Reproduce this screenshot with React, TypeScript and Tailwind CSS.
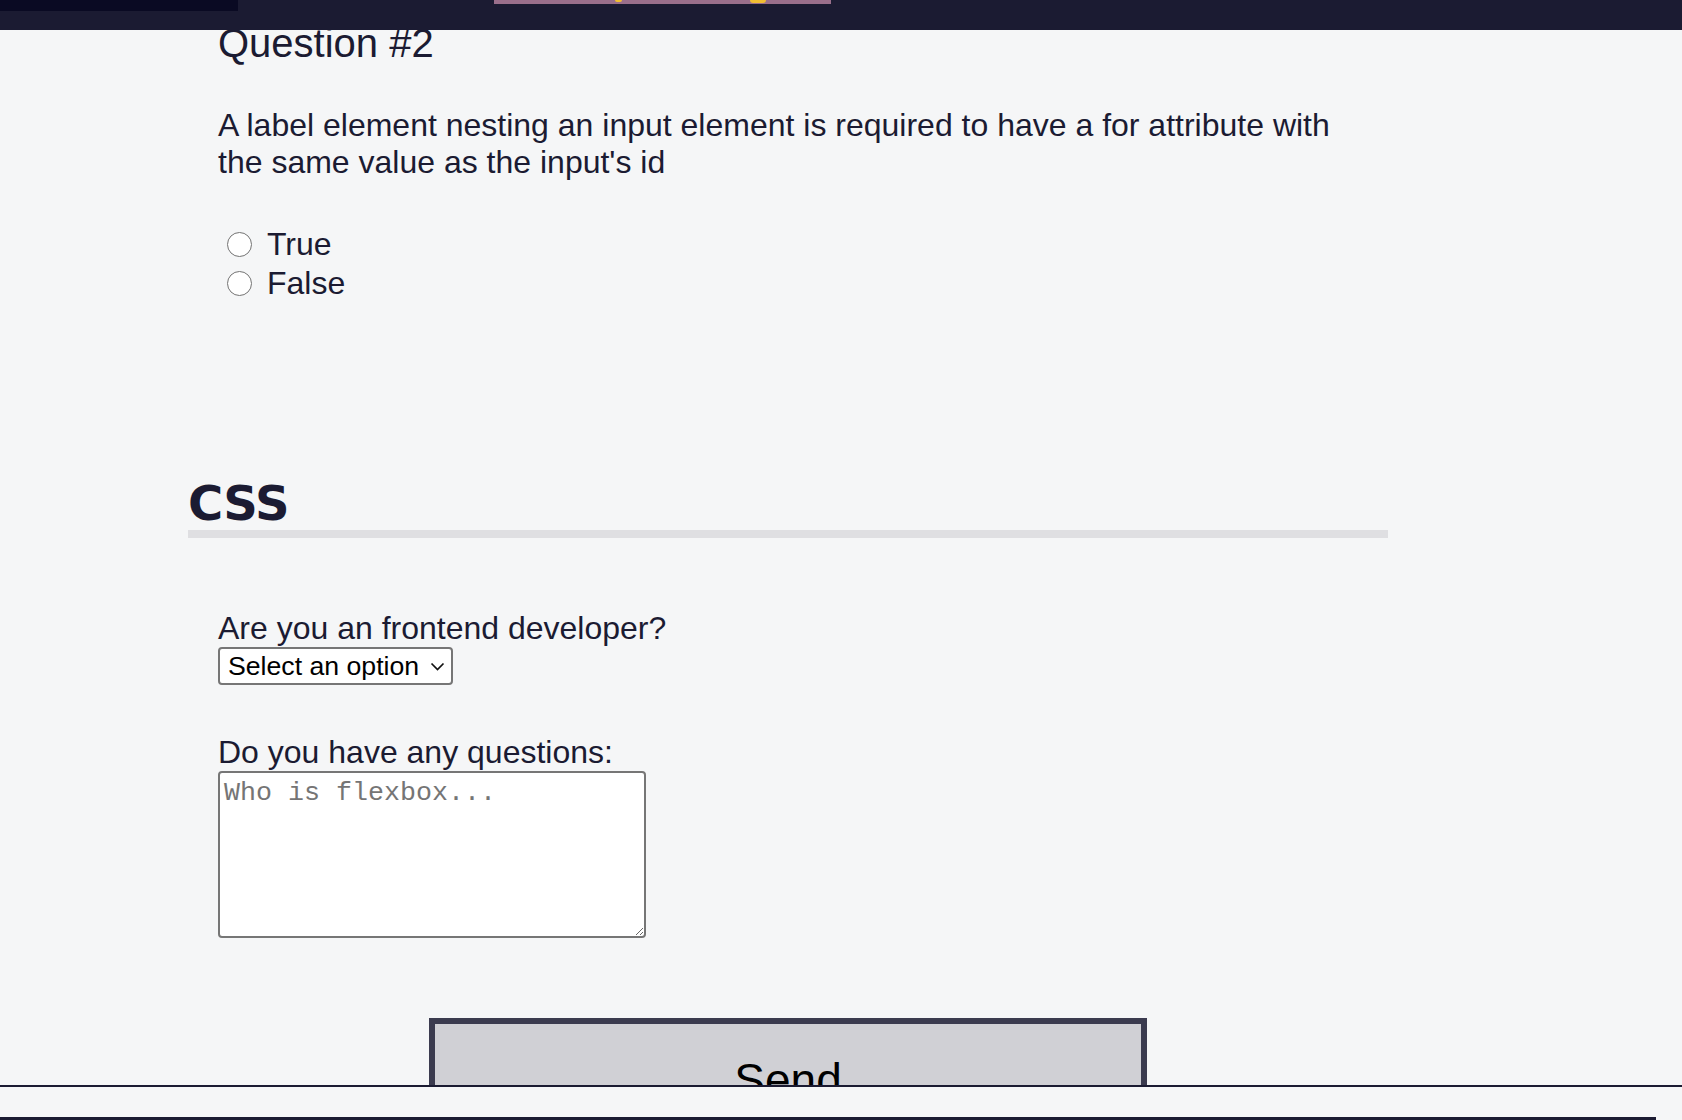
import { useState } from "react";

const answers = ["True", "False"];

function RadioRow({ label, checked, onSelect }: { label: string; checked: boolean; onSelect: () => void }) {
  return (
    <li className="flex h-[39px] items-center">
      <button
        type="button"
        onClick={onSelect}
        className="ml-[9px] flex h-[25px] w-[25px] items-center justify-center rounded-full border-[1.5px] border-[#737373] bg-white"
      >
        {checked ? <span className="h-[12px] w-[12px] rounded-full bg-[#1b1b32]" /> : null}
      </button>
      <span className="ml-[15px]">{label}</span>
    </li>
  );
}

export default function App() {
  const [answer, setAnswer] = useState<string | null>(null);
  const [frontend, setFrontend] = useState("");
  const [questions, setQuestions] = useState("");

  return (
    <div className="relative h-[1120px] overflow-hidden bg-[#f5f6f7] font-['Liberation_Sans',Helvetica,Arial,sans-serif] text-[#1b1b32]">
      <header className="absolute left-0 right-0 top-0 z-10 h-[30px] bg-[#1b1b32]">
        <div className="absolute left-0 top-0 h-[11px] w-[238px] bg-[#0a0a23]" />
        <div className="absolute left-[494px] top-0 h-[4px] w-[337px] bg-[#9a6f8b]">
          <span className="absolute left-[121px] top-0 h-[2px] w-[7px] rounded-b-full bg-[#f1be32]" />
          <span className="absolute left-[256px] top-0 h-[3px] w-[16px] rounded-b-full bg-[#f1be32]" />
        </div>
      </header>

      <main className="pt-[20px]">
        <section className="ml-[188px] w-[1200px]">
          <div className="pl-[30px]">
            <h3 className="text-[40px] leading-[46px]">Question #2</h3>
            <p className="mt-[41px] max-w-[1140px] text-[32px] leading-[37px]">
              A label element nesting an input element is required to have a for attribute with the same value as the
              input's id
            </p>
            <ul className="mt-[44px] text-[32px] leading-[37px]">
              {answers.map((item) => (
                <RadioRow key={item} label={item} checked={answer === item} onSelect={() => setAnswer(item)} />
              ))}
            </ul>
          </div>

          <h2 className="mt-[174px] border-b-[8px] border-[#dfdfe2] pb-[1px] font-['DejaVu_Sans',Verdana,sans-serif] text-[48px] font-bold leading-[52px] tracking-[-0.8px]">
            CSS
          </h2>

          <div className="pl-[30px]">
            <label className="mt-[72px] block text-[32px] leading-[37px]">Are you an frontend developer?</label>
            <div className="relative h-[38px] w-[235px]">
              <select
                value={frontend}
                onChange={(event) => setFrontend(event.target.value)}
                className="h-[38px] w-[235px] appearance-none rounded-[4px] border-2 border-[#767676] bg-white pl-[8px] text-[26.67px] leading-[30px] text-black"
              >
                <option value="">Select an option</option>
                <option value="yes">Yes</option>
                <option value="no">No</option>
              </select>
              <svg
                className="pointer-events-none absolute left-[212px] top-[15px]"
                width="15"
                height="9"
                viewBox="0 0 15 9"
                fill="none"
              >
                <path d="M1.5 1.5l6 6 6-6" stroke="#111" strokeWidth="1.7" />
              </svg>
            </div>

            <label className="mt-[49px] block text-[32px] leading-[37px]">Do you have any questions:</label>
            <textarea
              value={questions}
              onChange={(event) => setQuestions(event.target.value)}
              placeholder="Who is flexbox..."
              className="block h-[167px] w-[428px] rounded-[4px] border-2 border-[#767676] bg-white px-[4px] pt-[5px] font-['Liberation_Mono',monospace] text-[26.67px] leading-[30px] text-black placeholder:text-[#757575]"
            />
          </div>

          <button
            type="button"
            className="mx-auto mt-[80px] block h-[140px] w-[718px] border-[6px] border-[#3b3b4f] bg-[#d0d0d5] pt-[30px] text-[46px] leading-[53px] text-black"
          >
            <span className="block h-full">Send</span>
          </button>
        </section>
      </main>

      <div className="absolute bottom-0 left-0 right-0 z-10 flex h-[35px] flex-col justify-end border-t-2 border-[#1b1b32] bg-[#f5f6f7]">
        <div className="h-[3px] w-[1656px] bg-[#1b1b32]" />
      </div>
    </div>
  );
}
